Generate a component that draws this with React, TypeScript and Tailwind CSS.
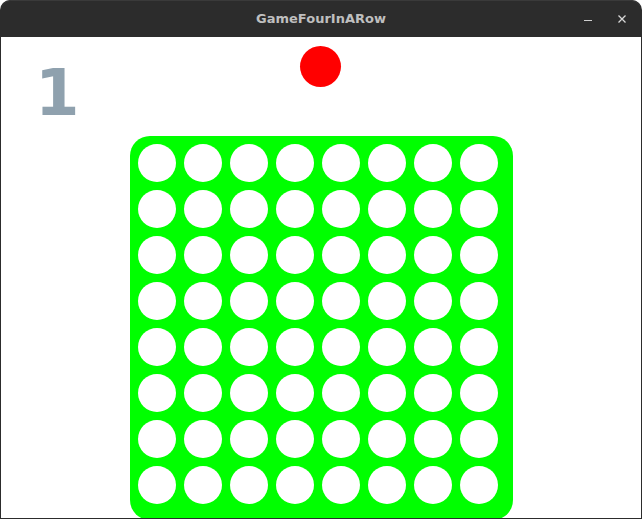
import React from "react";

export default function App() {
  const cells = Array.from({ length: 64 }, (_, i) => i);
  return (
    <div className="w-[642px] h-[519px] bg-white overflow-hidden">
      <div className="w-full h-full flex flex-col rounded-t-[10px] bg-[#2c2c2c] px-[1px] pb-[1px] overflow-hidden">
        <div className="h-[37px] shrink-0 grid grid-cols-[1fr_auto_1fr] items-center border-t border-[#3a3a3a] rounded-t-[10px]">
          <div />
          <div
            className="text-[13px] font-bold text-[#bfbfbf] -mt-[1px]"
            style={{ fontFamily: '"DejaVu Sans", sans-serif' }}
          >
            GameFourInARow
          </div>
          <div className="flex justify-end items-center pr-[15px] gap-[26px] text-[#d8d8d8]">
            <div className="w-[8px] h-[1px] bg-[#d0d0d0] mt-[2px]" />
            <svg width="8" height="8" viewBox="0 0 8 8" className="-mt-[1px]">
              <path d="M0.5 0.5 L7.5 7.5 M7.5 0.5 L0.5 7.5" stroke="#d8d8d8" strokeWidth="1.3" />
            </svg>
          </div>
        </div>
        <div className="flex-1 bg-white overflow-hidden flex flex-col items-center">
          <div className="w-full h-[99px] shrink-0 grid grid-cols-[1fr_auto_1fr]">
            <div
              className="pl-[34px] pt-[24px] text-[64px] leading-none font-bold text-[#8fa1ae]"
              style={{ fontFamily: '"DejaVu Sans", sans-serif' }}
            >
              1
            </div>
            <div className="pt-[9px] -ml-[1px]">
              <div className="w-[41px] h-[41px] rounded-full bg-[#ff0000]" />
            </div>
            <div />
          </div>
          <div className="w-[383px] h-[384px] shrink-0 rounded-[20px] bg-[#00ff00] pl-[8px] pt-[8px] grid grid-cols-[repeat(8,38px)] auto-rows-[38px] gap-[8px]">
            {cells.map((i) => (
              <div key={i} className="w-[38px] h-[38px] rounded-full bg-white" />
            ))}
          </div>
        </div>
      </div>
    </div>
  );
}
